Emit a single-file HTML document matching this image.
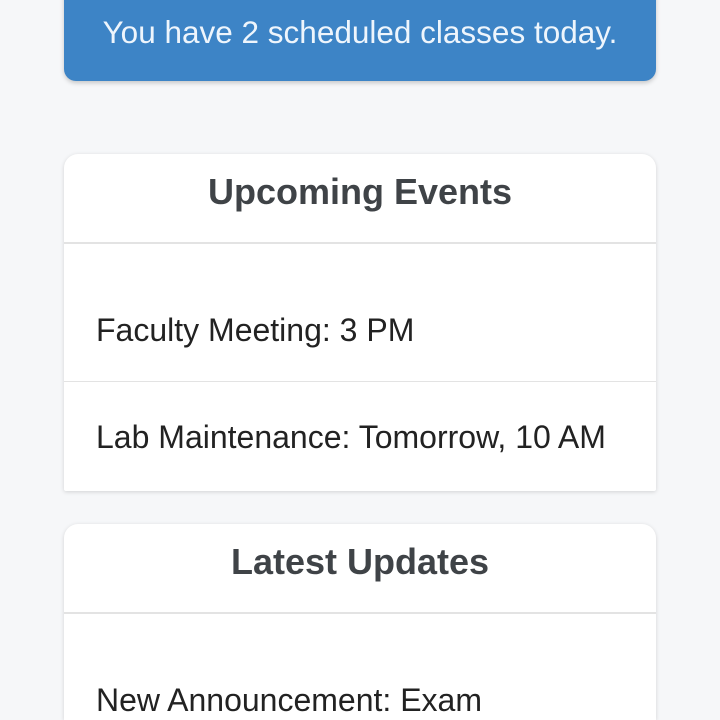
<!DOCTYPE html>
<html><head><style>
html,body{margin:0;padding:0;background:#f6f7f9;width:720px;height:720px;overflow:hidden;font-family:"Liberation Sans",sans-serif;}
.banner{position:absolute;left:64px;top:-40px;width:592px;height:121px;background:#3d84c6;border-radius:12px;box-shadow:0 2px 5px rgba(0,0,0,.2);color:#eef5fc;font-size:31.5px;text-align:center;box-sizing:border-box;padding-top:54px;white-space:nowrap;}
.card{position:absolute;left:64px;width:592px;background:#fff;border-radius:14px;box-shadow:0 1px 4px rgba(0,0,0,.15);overflow:hidden;}
.card h2{margin:0;height:90px;line-height:76px;text-align:center;font-size:36px;font-weight:bold;color:#3f4347;border-bottom:2px solid #e3e3e3;box-sizing:border-box;}
.item{font-size:32px;color:#222;padding-left:32px;box-sizing:border-box;white-space:nowrap;}
</style></head><body>
<div class="banner">You have 2 scheduled classes today.</div>
<div class="card" style="top:154px;height:337px;border-radius:14px 14px 2px 2px;">
<h2>Upcoming Events</h2>
<div class="item" style="height:138px;line-height:172px;border-bottom:1px solid #e3e3e3;">Faculty Meeting: 3 PM</div>
<div class="item" style="height:108px;line-height:110px;">Lab Maintenance: Tomorrow, 10 AM</div>
</div>
<div class="card" style="top:524px;height:196px;border-radius:14px 14px 0 0;">
<h2>Latest Updates</h2>
<div class="item" style="height:106px;line-height:172px;">New Announcement: Exam</div>
</div>
</body></html>
